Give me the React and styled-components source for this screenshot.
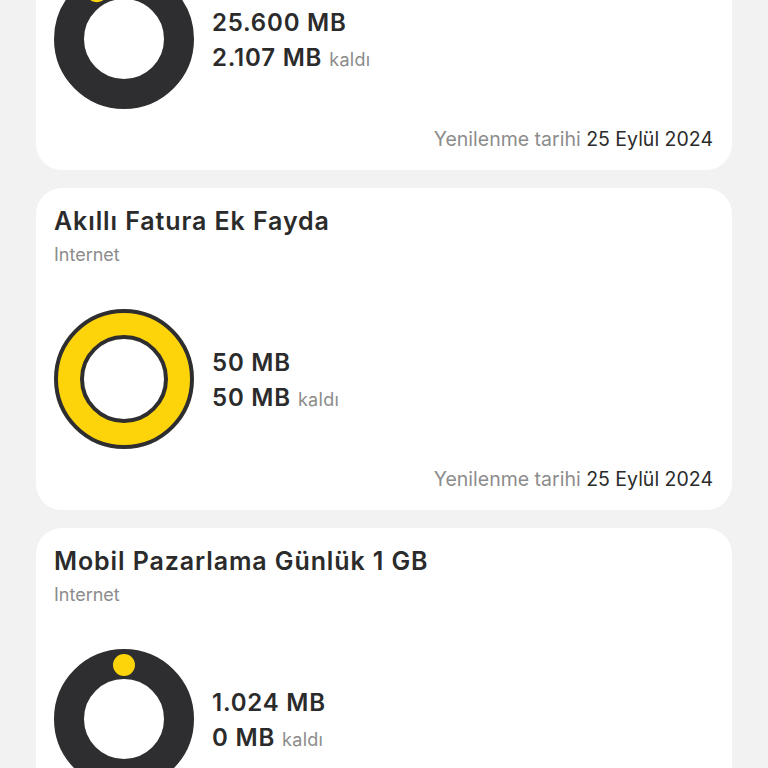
import React from "react";
import styled, { createGlobalStyle } from "styled-components";

const GlobalStyle = createGlobalStyle`
  html, body {
    margin: 0;
    padding: 0;
    background: #f2f2f2;
    font-family: "Inter", "Noto Sans", sans-serif;
    overflow: hidden;
  }
`;

const Page = styled.main`
  height: 768px;
  overflow: hidden;
  background-color: #f2f2f2;
`;

const List = styled.div`
  display: flex;
  flex-flow: column nowrap;
  gap: 18px;
  padding: 0 36px;
  margin-top: -152px;
`;

const Card = styled.section`
  background: #ffffff;
  border-radius: 26px;
  padding: 18px 19px 19px 18px;
  height: 322px;
  box-sizing: border-box;
  display: flex;
  flex-flow: column nowrap;
`;

const Title = styled.h2`
  margin: 0;
  font-size: 25px;
  line-height: 30px;
  font-weight: 600;
  letter-spacing: 0.9px;
  color: #2b2b2b;
`;

const Sub = styled.div`
  font-size: 18px;
  line-height: 24px;
  color: #8c8c8c;
  margin-top: 7px;
`;

const Usage = styled.div`
  display: flex;
  flex-flow: row nowrap;
  align-items: center;
  gap: 18px;
  margin-top: 42px;
`;

const Amounts = styled.div`
  display: flex;
  flex-flow: column nowrap;
  padding-top: 3px;
`;

const Amount = styled.div`
  font-size: 24px;
  line-height: 35px;
  font-weight: 600;
  letter-spacing: 0.8px;
  color: #2b2b2b;
`;

const Left = styled.span`
  font-size: 18px;
  font-weight: 400;
  letter-spacing: 0.3px;
  color: #8c8c8c;
  margin-left: 7px;
`;

const Renewal = styled.div`
  margin-top: auto;
  text-align: right;
  font-size: 19.5px;
  line-height: 24px;
  color: #8c8c8c;

  strong {
    font-weight: 400;
    color: #2b2b2b;
  }
`;

const DARK = "#2e2d2f";
const YELLOW = "#fdd40a";

function Ring({ fraction }) {
  const c = 70;
  const r = 55;
  let arc;
  if (fraction >= 1) {
    arc = <circle cx={c} cy={c} r={r} fill="none" stroke={YELLOW} strokeWidth="22" />;
  } else if (fraction <= 0.005) {
    arc = <circle cx={c} cy={c - r + 1} r="11" fill={YELLOW} />;
  } else {
    const a = fraction * 2 * Math.PI;
    const x = c - r * Math.sin(a);
    const y = c - r * Math.cos(a);
    const large = fraction > 0.5 ? 1 : 0;
    arc = (
      <path
        d={`M ${c} ${c - r} A ${r} ${r} 0 ${large} 0 ${x} ${y}`}
        fill="none"
        stroke={YELLOW}
        strokeWidth="22"
        strokeLinecap="round"
      />
    );
  }
  return (
    <svg width="140" height="140" viewBox="0 0 140 140">
      <circle cx={c} cy={c} r={r} fill="none" stroke={DARK} strokeWidth="30" />
      {arc}
    </svg>
  );
}

const packages = [
  { title: "Yıllık Internet Paketi", total: "25.600 MB", left: "2.107 MB", fraction: 2107 / 25600 },
  { title: "Akıllı Fatura Ek Fayda", total: "50 MB", left: "50 MB", fraction: 1 },
  { title: "Mobil Pazarlama Günlük 1 GB", total: "1.024 MB", left: "0 MB", fraction: 0 },
];

export default function App() {
  return (
    <Page>
      <GlobalStyle />
      <List>
        {packages.map((p) => (
          <Card key={p.title}>
            <Title>{p.title}</Title>
            <Sub>Internet</Sub>
            <Usage>
              <Ring fraction={p.fraction} />
              <Amounts>
                <Amount>{p.total}</Amount>
                <Amount>
                  {p.left}
                  <Left>kaldı</Left>
                </Amount>
              </Amounts>
            </Usage>
            <Renewal>
              Yenilenme tarihi <strong>25 Eylül 2024</strong>
            </Renewal>
          </Card>
        ))}
      </List>
    </Page>
  );
}
